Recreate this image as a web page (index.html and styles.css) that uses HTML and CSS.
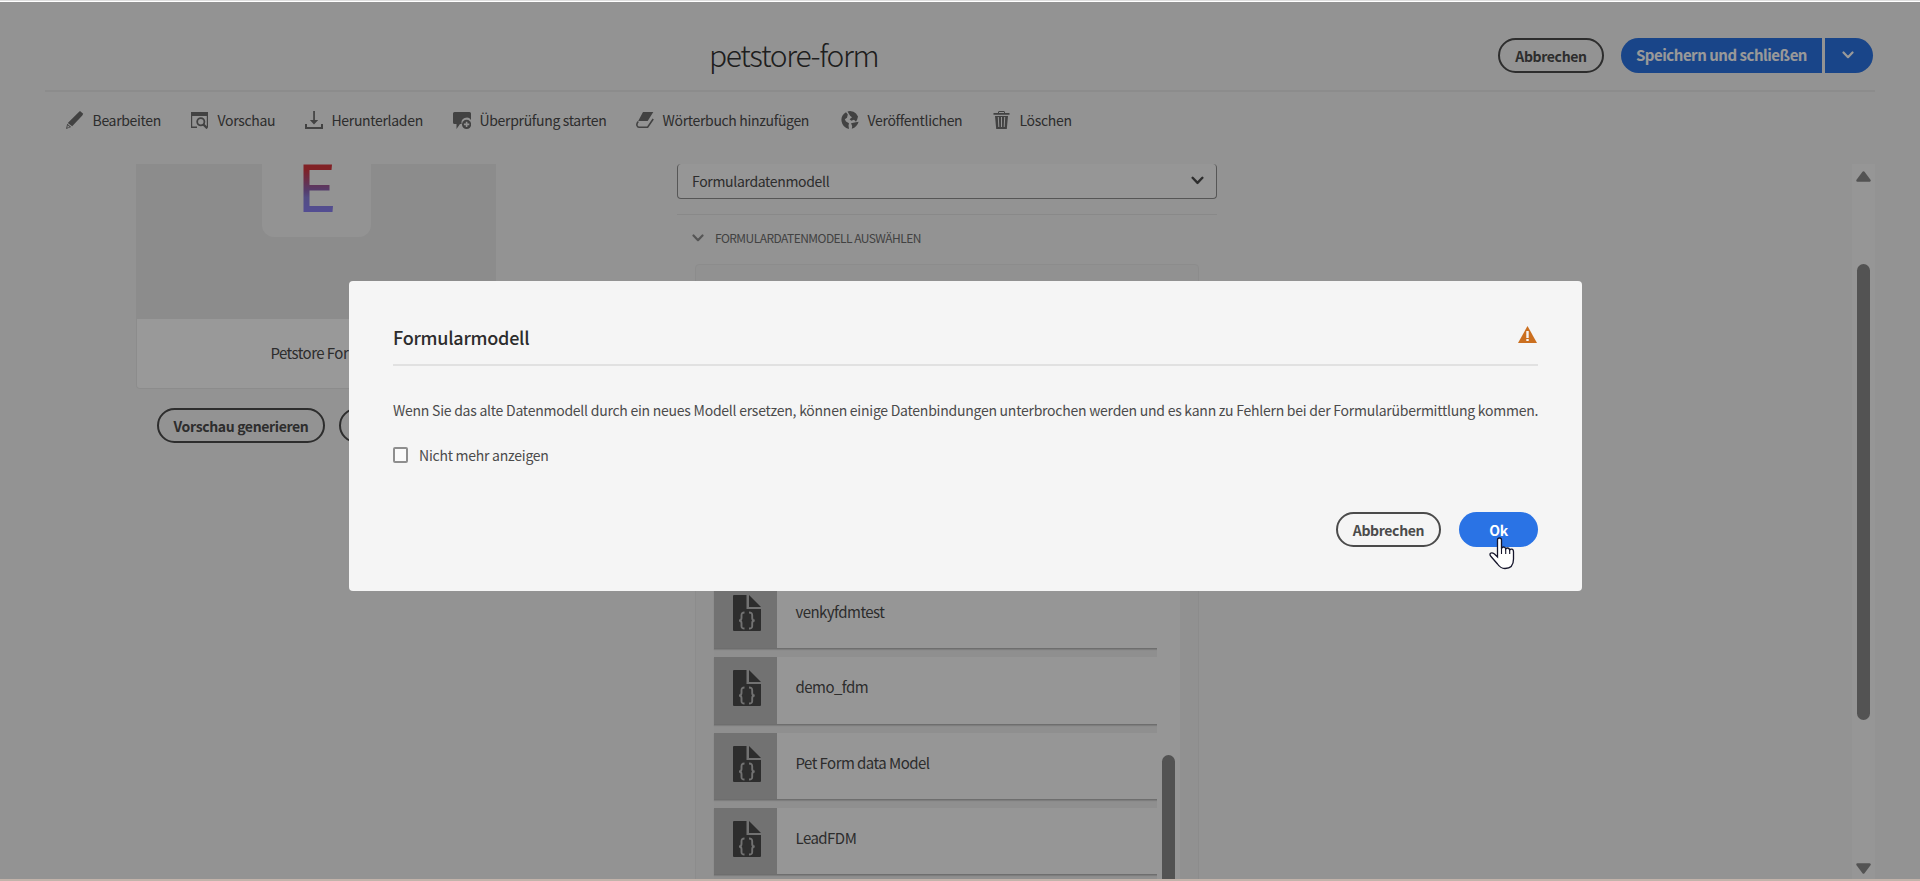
FILE: index.html
```html
<!DOCTYPE html>
<html lang="de">
<head>
<meta charset="utf-8">
<title>petstore-form</title>
<link rel="stylesheet" href="styles.css">
</head>
<body>
<svg class="symbols" width="0" height="0">
  <symbol id="fdm-file" viewBox="0 0 28 36">
    <path d="M1 0h12.500v14H28v21a1 1 0 0 1-1 1H1a1 1 0 0 1-1-1V1a1 1 0 0 1 1-1z" fill="#4b4b4b"/>
    <path d="M16 0l12 12H16z" fill="#4b4b4b"/>
    <path d="M11.500 17.500C8.500 17.500 8.500 19 8.500 20.500V23Q8.500 25.500 6 25.500Q8.500 25.500 8.500 28V31C8.500 33 9 33.500 11.500 33.500M16 17.500C19.200 17.500 19.200 19 19.200 20.500V23Q19.200 25.500 21.700 25.500Q19.200 25.500 19.200 28V31C19.200 33 18.500 33.500 16 33.500" fill="none" stroke="#bebebe" stroke-width="1.900"/>
  </symbol>
  <symbol id="chevron" viewBox="0 0 12 8"><path d="M1.500 1.500L6 6.200l4.500-4.700" fill="none" stroke="currentColor" stroke-width="2.200" stroke-linecap="round" stroke-linejoin="round"/></symbol>
</svg>
<div class="window">
  <div class="edge-top"></div>
  <main class="app">
    <header class="header">
      <h1 class="title">petstore-form</h1>
      <div class="header-actions">
        <button class="btn btn-outline">Abbrechen</button>
        <div class="split">
          <button class="btn btn-primary split-main">Speichern und schließen</button>
          <button class="btn btn-primary split-more"><svg width="12" height="8"><use href="#chevron"/></svg></button>
        </div>
      </div>
    </header>
    <nav class="toolbar">
      <a class="tool"><svg viewBox="0 0 18 18"><path d="M12.600 1.200L14 0l3.200 2.700-.9 1.900L6.200 15.300 1.800 11.900zM1.200 12.800l4 3.200L0 18z"/><path d="M1.700 14.300l2 1.600-2.400.9z" fill="#f5f5f5"/></svg><span>Bearbeiten</span></a>
      <a class="tool"><svg viewBox="0 0 18 18"><path d="M0 1h17v15h-1.200V5H1.200v10.500H6V17H0z"/><circle cx="9.800" cy="10.700" r="3.600" fill="none" stroke="#6e6e6e" stroke-width="1.800"/><path d="M12.300 13.400l4 4" stroke="#6e6e6e" stroke-width="2.200"/></svg><span>Vorschau</span></a>
      <a class="tool"><svg viewBox="0 0 18 18"><path d="M8.200 0h1.700v9h3.300L9 13.600 4.900 9h3.300zM0 13h2v3h14v-3h2v5H0z"/></svg><span>Herunterladen</span></a>
      <a class="tool"><svg viewBox="0 0 18 18"><path d="M1.500 1h15A1.500 1.500 0 0 1 18 2.500V9A5.200 5.200 0 0 0 8.600 13H7l-3.500 5v-5h-2A1.500 1.500 0 0 1 0 11.500v-9A1.500 1.500 0 0 1 1.500 1z"/><circle cx="13.600" cy="13.400" r="4.600"/><path d="M13.600 10.700v5.400M10.900 13.400h5.400" stroke="#f5f5f5" stroke-width="1.600"/></svg><span>Überprüfung starten</span></a>
      <a class="tool"><svg viewBox="0 0 18 18"><path d="M7 1h10.300l-5.600 9H2.200z"/><path d="M2.300 10.500Q.4 12.500 1 14.500Q1.600 16.200 3 16.200h8.600L17.200 8" fill="none" stroke="#6e6e6e" stroke-width="1.600"/></svg><span>Wörterbuch hinzufügen</span></a>
      <a class="tool"><svg viewBox="0 0 18 18"><path d="M5 1.200L6.800 3.500 6 6.800 3.800 8.300 5 10.500 8 12.200 7.500 14.500 8 17.900A9 9 0 0 1 5 1.200zM6.500.6L9 0Q13 .3 15 2.500L17 5.500 16.200 8.500 15 10.700 13 8.800 10.300 9.800 8.600 8.200 11 6.200 9.300 5 8 3zM10 12.300L13.500 11.500 17.600 10.800Q16.300 16 10.800 17.800L11.200 15z"/></svg><span>Veröffentlichen</span></a>
      <a class="tool"><svg viewBox="0 0 18 18"><path d="M5.500 2V1Q5.500.5 6 .5h5Q11.500.5 11.500 1v1" fill="none" stroke="#6e6e6e"/><path d="M.5 2h16v1.800H.5zM2 5h13l-1.200 13H3.200z"/><path d="M5.300 6l.5 10M8.500 6v10M11.700 6l-.5 10" stroke="#f5f5f5" stroke-width="1"/></svg><span>Löschen</span></a>
    </nav>
    <section class="workspace">
      <div class="preview">
        <div class="card">
          <div class="card-image"><div class="card-tile"><svg width="30" height="48" viewBox="0 0 30 48"><defs><linearGradient id="eg" x1="0" y1="0" x2="0" y2="1"><stop offset=".1" stop-color="#d7373f"/><stop offset=".55" stop-color="#8d65b4"/><stop offset=".7" stop-color="#8b81dc"/><stop offset="1" stop-color="#8b81f5"/></linearGradient></defs><path d="M.5 .5h28.500l-.5 5.500H6.500v15H26.500v5.500H6.500v15.500h23.500l-.5 6H.5z" fill="url(#eg)"/></svg></div></div>
          <div class="card-caption">Petstore Form</div>
        </div>
        <div class="preview-actions">
          <button class="btn btn-outline">Vorschau generieren</button>
          <button class="btn btn-outline btn-rest"></button>
        </div>
      </div>
      <div class="form">
        <div class="select"><span>Formulardatenmodell</span><svg width="13" height="9"><use href="#chevron"/></svg></div>
        <div class="section-head"><svg width="12" height="8"><use href="#chevron"/></svg><span>FORMULARDATENMODELL AUSWÄHLEN</span></div>
        <div class="panel">
          <div class="list">
            <div class="row"><div class="thumb"><svg width="28" height="36"><use href="#fdm-file"/></svg></div><span class="name">venkyfdmtest</span></div>
            <div class="row"><div class="thumb"><svg width="28" height="36"><use href="#fdm-file"/></svg></div><span class="name">demo_fdm</span></div>
            <div class="row"><div class="thumb"><svg width="28" height="36"><use href="#fdm-file"/></svg></div><span class="name">Pet Form data Model</span></div>
            <div class="row"><div class="thumb"><svg width="28" height="36"><use href="#fdm-file"/></svg></div><span class="name">LeadFDM</span></div>
          </div>
          <div class="list-track"><div class="list-thumb"></div></div>
        </div>
      </div>
      <div class="scroll">
        <svg width="15" height="11" viewBox="0 0 15 11"><path d="M7.500 1.500L13.500 9.500h-12z" fill="#8a8a8a" stroke="#8a8a8a" stroke-width="2.500" stroke-linejoin="round"/></svg>
        <div class="scroll-thumb"></div>
        <svg width="15" height="11" viewBox="0 0 15 11"><path d="M7.500 9.500L13.500 1.500h-12z" fill="#8a8a8a" stroke="#8a8a8a" stroke-width="2.500" stroke-linejoin="round"/></svg>
      </div>
    </section>
  </main>
  <div class="edge-bottom"></div>
  <div class="overlay">
    <div class="dialog">
      <div class="dialog-head">
        <h2>Formularmodell</h2>
        <svg width="19" height="17" viewBox="0 0 19 17"><path d="M9.500 0L19 17H0z" fill="#cb6f1f"/><path d="M8.300 5h2.400v7H8.300zM8.300 13h2.400v2H8.300z" fill="#f5f5f5"/></svg>
      </div>
      <p class="message">Wenn Sie das alte Datenmodell durch ein neues Modell ersetzen, können einige Datenbindungen unterbrochen werden und es kann zu Fehlern bei der Formularübermittlung kommen.</p>
      <label class="check"><span class="box"></span><span>Nicht mehr anzeigen</span></label>
      <div class="dialog-actions">
        <button class="btn btn-outline btn-cancel">Abbrechen</button>
        <button class="btn btn-primary btn-ok">Ok</button>
      </div>
    </div>
    <svg class="cursor" width="26" height="33" viewBox="0 0 26 33"><path d="M8.500 20V3Q8.500 1 10.500 1t2 2v8.500Q13 10 14.700 10t2 2Q17.200 11 18.700 11t2 2Q21.200 12 22.700 12.200 24.500 12.400 24.500 15v7Q24.500 31.500 16 31.500 11.500 31.500 8.500 27L2 19.500Q.3 17.500 1.500 16.200 3 15.200 5.500 17L8.500 20z" fill="#fff" stroke="#15152b" stroke-width="1.300"/><path d="M12.500 11v6M16.700 12v5M20.700 13v4" stroke="#15152b" stroke-width="1.100"/></svg>
  </div>
</div>
</body>
</html>
```
FILE: styles.css
```css
* { box-sizing: border-box; }
body {
  margin: 0;
  overflow: hidden;
  font-family: "Noto Sans CJK SC", "Noto Sans", sans-serif;
  font-size: 14px;
  letter-spacing: -.245px;
  white-space: nowrap;
  color: #4b4b4b;
}
h1, h2, p { margin: 0; font-weight: 400; }
.symbols { position: absolute; }
.window {
  position: relative;
  display: flex;
  flex-direction: column;
  width: 1920px;
  height: 881px;
  overflow: hidden;
}
.edge-top { height: 2px; background: #fff; border-top: 1px solid #dedede; }
.edge-bottom { height: 2px; background: #c2b3aa; }
.app { display: flex; flex-direction: column; height: 877px; padding: 0 45px; background: #f5f5f5; }

.header {
  display: grid;
  grid-template-columns: 1fr auto;
  height: 90px;
  padding: 36px 2px 0 664px;
  border-bottom: 2px solid #eaeaea;
}
.title { margin-top: -2px; font-size: 30px; font-weight: 300; line-height: 36px; letter-spacing: -1.300px; color: #323232; }
.header-actions { display: flex; gap: 17px; height: 35px; }
.btn {
  display: flex;
  align-items: center;
  justify-content: center;
  height: 35px;
  padding: 0;
  border: 0;
  border-radius: 18px;
  font: 700 14px/20px "Noto Sans CJK SC", "Noto Sans", sans-serif;
  letter-spacing: -.360px;
  color: #4b4b4b;
}
.btn-outline { width: 106px; border: 2px solid #4b4b4b; background: transparent; }
.btn-primary { background: #2a73e5; color: #fff; }
.split { display: flex; gap: 3px; }
.split-main { width: 201px; padding-bottom: 1px; border-radius: 18px 0 0 18px; font-size: 15px; letter-spacing: -.480px; }
.split-more { width: 48px; padding: 0 2px 1px 0; border-radius: 0 18px 18px 0; }

.toolbar {
  display: grid;
  grid-template-columns: 125px 114px 148px 183px 205px 152px auto;
  height: 72px;
  padding: 18px 0 0 21px;
  letter-spacing: -.320px;
}
.tool { display: flex; align-items: center; gap: 8.500px; height: 20px; line-height: 20px; }
.tool svg { width: 18px; height: 18px; fill: #6e6e6e; }

.workspace { display: flex; height: 715px; padding-left: 91px; overflow: hidden; }
.preview { width: 360px; }
.card { border: 1px solid #eaeaea; border-top: 0; border-radius: 0 0 4px 4px; background: #fff; }
.card-image { display: flex; justify-content: center; height: 155px; background: #e9e9e9; }
.card-tile { display: flex; justify-content: center; width: 109px; height: 73px; padding-left: 3px; border-radius: 0 0 12px 12px; background: #f5f5f5; }
.card-caption { height: 69px; padding-top: 24px; text-align: center; font-size: 15px; line-height: 20px; letter-spacing: -.540px; }
.preview-actions { display: flex; gap: 14px; padding: 19px 0 0 21px; }
.preview-actions .btn { flex: none; width: 168px; }
.preview-actions .btn-rest { width: 120px; }

.form { width: 540px; margin-left: 181px; }
.select {
  display: flex;
  justify-content: space-between;
  height: 35px;
  padding: 7px 12px 0 14px;
  border: 1px solid #909090;
  border-top: 0;
  border-radius: 4px;
  background: #fafafa;
  line-height: 20px;
  letter-spacing: -.330px;
}
.select svg { margin-top: 5px; }
.section-head {
  display: flex;
  gap: 11px;
  height: 50px;
  margin-top: 15px;
  padding: 13px 0 0 15px;
  border-top: 1px solid #e4e4e4;
  font-size: 12px;
  line-height: 20px;
  letter-spacing: -.550px;
  color: #6e6e6e;
}
.section-head svg { margin-top: 6px; color: #8e8e8e; }
.panel {
  display: flex;
  width: 504px;
  height: 640px;
  margin-left: 18px;
  padding: 317px 0 0 18px;
  border: 1px solid #eaeaea;
  border-radius: 4px;
  background: #f2f2f2;
}
.list { display: flex; flex-direction: column; gap: 8px; width: 443px; background: #efefef; }
.row { display: flex; height: 67.300px; flex: none; background: #fbfbfb; border-bottom: 1px solid #b8b8b8; box-shadow: 0 1px 1px #d0d0d0; font-size: 15px; letter-spacing: -.540px; }
.name { padding: 20px 0 0 18.500px; line-height: 20px; }
.thumb { width: 63px; padding: 13px 0 0 18.500px; background: #bebebe; }
.list-track { width: 23px; padding: 173px 5px 0; background: #fbfbfb; }
.list-thumb { height: 200px; border-radius: 7px; background: #8a8a8a; }

.scroll {
  display: flex;
  flex-direction: column;
  align-items: center;
  width: 23px;
  height: 715px;
  margin-left: auto;
  padding: 7px 0 5px;
  background: #fbfbfb;
}
.scroll-thumb { width: 13px; height: 456px; margin: 82px 0 143px; border-radius: 7px; background: #8a8a8a; }
.scroll svg { flex: none; }

.overlay { position: absolute; inset: 2px 0 2px; background: rgba(0, 0, 0, .4); }
.dialog {
  position: absolute;
  left: 349px;
  top: 279px;
  width: 1233px;
  height: 310px;
  padding: 44px;
  border-radius: 4px;
  background: #f5f5f5;
}
.dialog-head { display: flex; justify-content: space-between; height: 41px; border-bottom: 2px solid #e1e1e1; }
.dialog-head h2 { font-size: 18px; font-weight: 500; line-height: 24px; letter-spacing: -.250px; color: #2c2c2c; }
.dialog-head svg { margin: 1px 1px 0 0; }
.message { margin-top: 34px; line-height: 20px; }
.check { display: flex; gap: 11px; height: 20px; margin-top: 25px; line-height: 20px; }
.box { width: 15px; height: 16px; margin-top: 2px; border: 2px solid #8e8e8e; border-radius: 2px; background: #fafafa; }
.dialog-actions { display: flex; justify-content: flex-end; gap: 18px; margin-top: 47px; }
.btn-cancel { width: 105px; }
.btn-ok { width: 79px; }
.cursor { position: absolute; left: 1489px; top: 535px; }
```
